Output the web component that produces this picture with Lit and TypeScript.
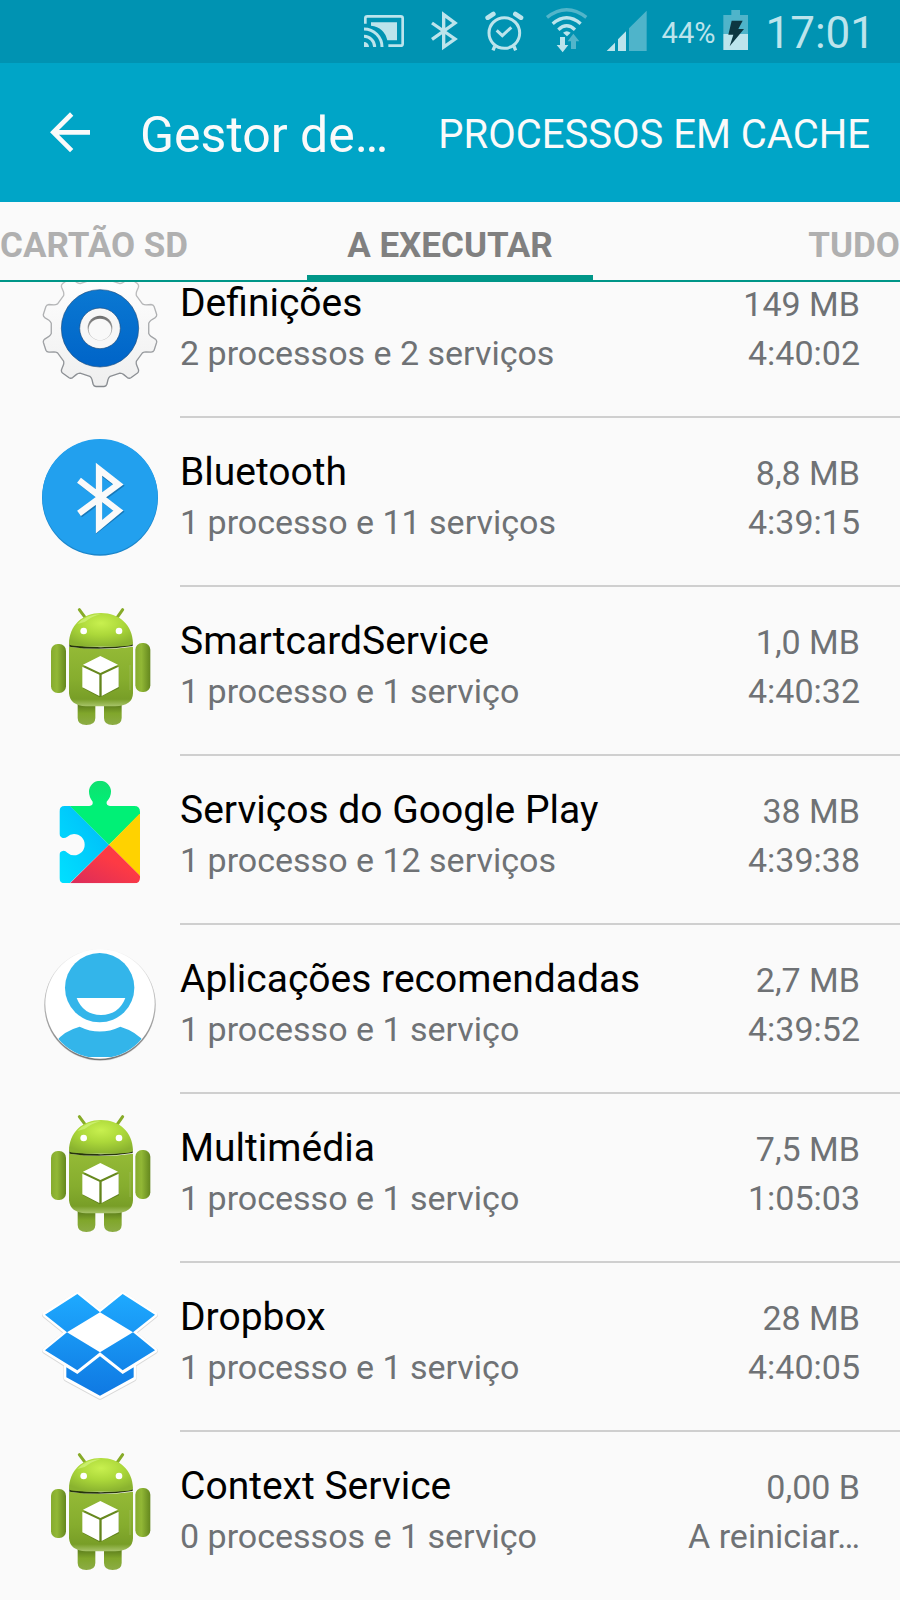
import { LitElement, html, css, svg } from "lit";
import { customElement, property, state } from "lit/decorators.js";

type IconName = "gear" | "bluetooth" | "android" | "play" | "person" | "dropbox";

interface Process {
  icon: IconName;
  name: string;
  detail: string;
  memory: string;
  time: string;
}

const PROCESSES: Process[] = [
  { icon: "gear", name: "Definições", detail: "2 processos e 2 serviços", memory: "149 MB", time: "4:40:02" },
  { icon: "bluetooth", name: "Bluetooth", detail: "1 processo e 11 serviços", memory: "8,8 MB", time: "4:39:15" },
  { icon: "android", name: "SmartcardService", detail: "1 processo e 1 serviço", memory: "1,0 MB", time: "4:40:32" },
  { icon: "play", name: "Serviços do Google Play", detail: "1 processo e 12 serviços", memory: "38 MB", time: "4:39:38" },
  { icon: "person", name: "Aplicações recomendadas", detail: "1 processo e 1 serviço", memory: "2,7 MB", time: "4:39:52" },
  { icon: "android", name: "Multimédia", detail: "1 processo e 1 serviço", memory: "7,5 MB", time: "1:05:03" },
  { icon: "dropbox", name: "Dropbox", detail: "1 processo e 1 serviço", memory: "28 MB", time: "4:40:05" },
  { icon: "android", name: "Context Service", detail: "0 processos e 1 serviço", memory: "0,00 B", time: "A reiniciar…" },
];

/* Outline of a cog with ten teeth. */
function cogPath(cx: number, cy: number): string {
  const at = (r: number, deg: number) => {
    const a = (deg * Math.PI) / 180;
    return `${(cx + r * Math.cos(a)).toFixed(1)} ${(cy + r * Math.sin(a)).toFixed(1)}`;
  };
  let d = "";
  for (let i = 0; i < 10; i++) {
    const t = 18 + i * 36;
    d += `${i ? "L" : "M"}${at(147, t - 12)}`;
    d += `Q${at(150, t - 10)} ${at(155, t - 9)}L${at(169, t - 7)}Q${at(175, t - 6)} ${at(175, t - 4)}`;
    d += `L${at(175, t + 4)}Q${at(175, t + 6)} ${at(169, t + 7)}L${at(155, t + 9)}Q${at(150, t + 10)} ${at(147, t + 12)}`;
  }
  return d + "Z";
}

const ICONS: Record<IconName, { box: string; art: unknown }> = {
  gear: {
    box: "60 -3 360 360",
    art: svg`
      <defs>
        <linearGradient id="cog" x1="0" y1="0" x2="0" y2="1"><stop offset="0" stop-color="#fff"/><stop offset="1" stop-color="#efefef"/></linearGradient>
        <linearGradient id="cogEdge" x1="0" y1="0" x2="0" y2="1"><stop offset="0" stop-color="#c8c8c8"/><stop offset="1" stop-color="#85898e"/></linearGradient>
        <linearGradient id="cogBlue" x1="0" y1="0" x2="0" y2="1"><stop offset="0" stop-color="#0a78d2"/><stop offset="1" stop-color="#0064c8"/></linearGradient>
        <linearGradient id="cogHole" x1="0" y1="0" x2="0" y2="1"><stop offset="0" stop-color="#6c6c6c"/><stop offset="1" stop-color="#c6c6c6"/></linearGradient>
      </defs>
      <path d=${cogPath(240, 175)} fill="url(#cog)" stroke="url(#cogEdge)" stroke-width="4" stroke-linejoin="round"/>
      <circle cx="240" cy="175" r="116" fill="url(#cogBlue)" stroke="#1c4f80" stroke-width="2"/>
      <circle cx="240" cy="175" r="61" fill="#f7f7f7" stroke="#1d4c7c" stroke-width="2"/>
      <circle cx="240" cy="174" r="37" fill="url(#cogHole)"/>
      <ellipse cx="240" cy="178" rx="34" ry="32" fill="#f9f9f9"/>`,
  },
  bluetooth: {
    box: "60 54 360 360",
    art: svg`
      <circle cx="240" cy="233" r="174" fill="#1b86cb"/>
      <circle cx="240" cy="230" r="173" fill="#22a0ee"/>
      <path d="M180 184L298 275L237 323V152L298 197L180 284" fill="none" stroke="#1878b8" stroke-width="19"/>
      <path d="M177 181L295 272L237 320V148L295 193L177 280" fill="none" stroke="#fafafa" stroke-width="19"/>`,
  },
  android: {
    box: "60 51 360 360",
    art: svg`
      <defs>
        <radialGradient id="head" cx=".5" cy=".3" r=".7"><stop offset="0" stop-color="#c8f04f"/><stop offset=".5" stop-color="#acd83a"/><stop offset="1" stop-color="#8ab32f"/></radialGradient>
        <linearGradient id="torso" x1="0" y1="0" x2="0" y2="1"><stop offset="0" stop-color="#94ba36"/><stop offset=".55" stop-color="#86ad2e"/><stop offset=".88" stop-color="#789e27"/><stop offset="1" stop-color="#a8c46a"/></linearGradient>
        <linearGradient id="limb" x1="0" y1="0" x2="1" y2="0"><stop offset="0" stop-color="#86ab2e"/><stop offset=".4" stop-color="#92b836"/><stop offset="1" stop-color="#64871e"/></linearGradient>
        <linearGradient id="leg" x1="0" y1="0" x2="0" y2="1"><stop offset="0" stop-color="#506f16"/><stop offset=".5" stop-color="#80a62b"/><stop offset="1" stop-color="#8cac45"/></linearGradient>
      </defs>
      <path d="M178 59L198 86M308 59L289 86" stroke="#87ab28" stroke-width="9" stroke-linecap="round"/>
      <path d="M173 335H226V384Q226 405 199 405Q173 405 173 384ZM252 335H305V384Q305 405 278 405Q252 405 252 384Z" fill="url(#leg)"/>
      <rect x="93" y="162" width="45" height="147" rx="20" fill="url(#limb)"/>
      <rect x="346" y="159" width="45" height="147" rx="20" fill="url(#limb)"/>
      <path d="M147 170Q242 184 339 170V310Q338 348 285 349H198Q150 347 147 310Z" fill="url(#torso)"/>
      <path d="M148 162Q242 182 338 162V168Q242 184 148 170Z" fill="#26340c"/>
      <path d="M147 162C148 106 187 69 243 69C299 69 338 106 339 160Q339 166 325 167Q242 174 161 167Q147 166 147 162Z" fill="url(#head)"/>
      <path d="M172 102Q200 72 243 72Q214 80 194 96Z" fill="#d9f98a" opacity=".6"/>
      <circle cx="191" cy="123" r="10" fill="#fff"/><circle cx="297" cy="123" r="10" fill="#fff"/>
      <path d="M189 231V295L239 322L297 295V231L241 202Z" fill="#4a6811" opacity=".55"/>
      <path d="M241 198L294 224L241 249L189 224ZM187 230L238 254V318L187 292ZM245 254L296 230V291L245 318Z" fill="#fff"/>
      <path d="M330 225V300" stroke="#a3bd65" stroke-width="3" opacity=".6"/>`,
  },
  play: {
    box: "60 48 360 360",
    art: svg`
      <defs>
        <clipPath id="puzzle"><path d="M134 138H208Q220 136 218 125Q207 111 207 95A33 33 0 0 1 273 95Q273 111 260 125Q258 136 270 138H343Q360 138 360 155V353Q360 370 343 370H135Q118 370 118 353V284Q119 275 128 273Q135 271 142 278Q151 286 162 286A32 32 0 0 0 162 222Q150 222 142 230Q134 236 126 233Q119 231 118 222V155Q118 138 134 138Z"/></clipPath>
        <linearGradient id="playBlue" x1="0" y1="1" x2="1" y2="0"><stop offset="0" stop-color="#00e1ff"/><stop offset="1" stop-color="#00b8f8"/></linearGradient>
        <linearGradient id="playRed" x1="0" y1="1" x2="1" y2="0"><stop offset="0" stop-color="#d92b5c"/><stop offset=".6" stop-color="#fd3a44"/></linearGradient>
        <linearGradient id="playGreen" x1="0" y1="0" x2="0" y2="1"><stop offset="0" stop-color="#10e070"/><stop offset=".4" stop-color="#00f076"/></linearGradient>
      </defs>
      <g clip-path="url(#puzzle)">
        <path d="M118 138H151L267 254L149 370H118Z" fill="url(#playBlue)"/>
        <path d="M150 138V60H362V160L267 254Z" fill="url(#playGreen)"/>
        <path d="M362 158V350L267 254Z" fill="#ffd200"/>
        <path d="M267 254L362 349V372H148Z" fill="url(#playRed)"/>
      </g>`,
  },
  person: {
    box: "60 45 360 360",
    art: svg`
      <defs>
        <clipPath id="face"><circle cx="240" cy="222" r="163"/></clipPath>
        <linearGradient id="rim" x1="0" y1="0" x2="0" y2="1"><stop offset="0" stop-color="#f5f5f5"/><stop offset=".5" stop-color="#b4b4b4"/><stop offset="1" stop-color="#777"/></linearGradient>
      </defs>
      <circle cx="240" cy="226" r="167" fill="#000" opacity=".1"/>
      <circle cx="240" cy="224" r="167" fill="url(#rim)"/>
      <circle cx="240" cy="222" r="164" fill="#fff"/>
      <circle cx="239" cy="173" r="104" fill="#33b5ea"/>
      <path d="M170 204H316Q297 254 243 255Q189 254 170 204Z" fill="#fff"/>
      <path clip-path="url(#face)" d="M105 338Q130 303 179 290Q239 319 301 290Q350 305 375 338L360 381H120Z" fill="#33b5ea"/>`,
  },
  dropbox: {
    box: "60 39 360 360",
    art: svg`
      <defs>
        <linearGradient id="box" gradientUnits="userSpaceOnUse" x1="0" y1="70" x2="0" y2="380"><stop offset="0" stop-color="#1eaaff"/><stop offset="1" stop-color="#0f78e2"/></linearGradient>
      </defs>
      <g stroke-linejoin="round">
        <path d="M172 72L240 127L308 72L405 134L339 187L405 241L341 282V324L240 379L139 324V282L75 241L141 187L75 134Z" fill="#aaa" stroke="#d8d8d8" stroke-width="17" transform="translate(0 2)"/>
        <path d="M172 72L240 127L308 72L405 134L339 187L405 241L341 282V324L240 379L139 324V282L75 241L141 187L75 134Z" fill="#fff" stroke="#fff" stroke-width="15"/>
      </g>
      <path d="M172 72L240 127L141 187L75 134ZM308 72L405 134L339 187L240 127ZM141 187L240 247L172 301L75 241ZM339 187L405 241L308 301L240 247Z" fill="url(#box)"/>
      <path d="M139 292L172 312L240 259L308 312L341 292V322L240 377L139 322Z" fill="url(#box)"/>`,
  },
};

const STATUS_ICONS = [
  {
    label: "Transmitir ecrã",
    box: "12 0 183 189",
    art: svg`
      <path d="M46 71V55Q46 49 52 49H152Q158 49 158 55V131Q158 137 152 137H115" fill="none" stroke="#bce4ec" stroke-width="8"/>
      <path d="M63 67H141V121H112Q103 82 63 77Z" fill="#bce4ec"/>
      <path d="M42 87A54 54 0 0 1 96 141M42 109A32 32 0 0 1 74 141" fill="none" stroke="#bce4ec" stroke-width="9"/>
      <path d="M42 126A15 15 0 0 1 57 141H42Z" fill="#bce4ec"/>`,
  },
  {
    label: "Bluetooth",
    box: "195 0 183 189",
    art: svg`<path d="M246 69L315 117L281 141V44L315 69L246 118" fill="none" stroke="#bce4ec" stroke-width="10"/>`,
  },
  {
    label: "Alarme",
    box: "378 0 183 189",
    art: svg`
      <circle cx="463" cy="99" r="46" fill="none" stroke="#bce4ec" stroke-width="9"/>
      <path d="M413 53L430 42M513 53L496 42" stroke="#bce4ec" stroke-width="14" stroke-linecap="round"/>
      <path d="M434 139L429 151M492 139L497 151" stroke="#bce4ec" stroke-width="10"/>
      <path d="M440 91L457 107L484 82" fill="none" stroke="#bce4ec" stroke-width="9"/>`,
  },
  {
    label: "Wi-Fi",
    box: "561 0 183 189",
    art: svg`
      <g fill="none" stroke="#bce4ec" stroke-width="10">
        <path d="M591 52Q650 6 709 52" stroke="#52b5ca"/>
        <path d="M608 71Q650 35 692 71"/>
        <path d="M625 89Q650 66 675 89"/>
      </g>
      <path d="M639 98Q650 89 662 98L651 109Z" fill="#bce4ec"/>
      <path d="M630 111H645V135H655L638 157L620 135H630Z" fill="#bce4ec"/>
      <path d="M663 147V124H653L670 101L688 124H678V147Z" fill="#52b5ca"/>`,
  },
  {
    label: "Rede móvel",
    box: "744 0 183 189",
    art: svg`
      <path d="M770 153L795 128V153ZM804 153V118L828 94V153Z" fill="#bce4ec"/>
      <path d="M837 153V85L890 32V153Z" fill="#4fb4ca"/>`,
  },
];

@customElement("status-bar")
export class StatusBar extends LitElement {
  static styles = css`
    :host {
      display: flex;
      align-items: center;
      justify-content: flex-end;
      height: 63px;
      padding-right: 25px;
      background: #0093b2;
      color: #bce4ec;
      white-space: nowrap;
    }
    .glyph {
      flex: none;
      width: 61px;
      height: 63px;
    }
    .level {
      margin-left: 3px;
      font-size: 29px;
      line-height: 63px;
      padding-top: 3px;
    }
    .battery {
      flex: none;
      width: 27px;
      height: 63px;
      margin: 0 16px 0 7px;
    }
    .clock {
      font-size: 44px;
      line-height: 63px;
      padding-top: 4px;
    }
  `;

  render() {
    return html`
      ${STATUS_ICONS.map(
        (i) => html`<svg class="glyph" viewBox=${i.box} role="img" aria-label=${i.label}>${i.art}</svg>`
      )}
      <span class="level">44%</span>
      <svg class="battery" viewBox="369 0 81 189" role="img" aria-label="A carregar">
        <path d="M373 45H397V30H423V45H447V102H373Z" fill="#4fb4ca" />
        <path d="M373 102H447V150H373Z" fill="#bce4ec" />
        <path d="M398 62H431L418 87H435L392 139L403 104H388Z" fill="#0d3741" />
      </svg>
      <time class="clock">17:01</time>
    `;
  }
}

@customElement("process-row")
export class ProcessRow extends LitElement {
  @property({ attribute: false }) process!: Process;
  @property({ type: Boolean }) last = false;

  static styles = css`
    :host {
      display: block;
    }
    .row {
      display: flex;
      align-items: stretch;
      gap: 20px;
      width: 100%;
      height: 169px;
      margin: 0;
      padding: 0 0 0 40px;
      border: 0;
      background: none;
      font: inherit;
      color: #6f7275;
      text-align: left;
      cursor: pointer;
    }
    .icon {
      flex: none;
      width: 120px;
      height: 120px;
      margin-top: 20px;
    }
    .body {
      flex: 1;
      min-width: 0;
      display: grid;
      grid-template-columns: minmax(0, 1fr) auto;
      grid-auto-rows: 50px;
      align-items: baseline;
      padding: 29px 40px 0 0;
      border-bottom: 2px solid #cfcfcf;
      font-size: 34px;
      line-height: 50px;
      white-space: nowrap;
    }
    .body.last {
      border-bottom: 0;
    }
    .name {
      font-size: 39px;
      color: #000;
    }
    .value {
      text-align: right;
    }
  `;

  render() {
    const p = this.process;
    const icon = ICONS[p.icon];
    return html`
      <button class="row" type="button">
        <svg class="icon" viewBox=${icon.box} aria-hidden="true">${icon.art}</svg>
        <span class="body ${this.last ? "last" : ""}">
          <span class="name">${p.name}</span>
          <span class="value">${p.memory}</span>
          <span class="detail">${p.detail}</span>
          <span class="value">${p.time}</span>
        </span>
      </button>
    `;
  }
}

@customElement("app-root")
export class AppRoot extends LitElement {
  @state() private selected = 1;

  private tabs = ["CARTÃO SD", "A EXECUTAR", "TUDO"];

  static styles = css`
    :host {
      display: flex;
      flex-direction: column;
      height: 100vh;
      overflow: hidden;
      background: #fafafa;
      font-family: Roboto, "Noto Sans", sans-serif;
    }
    .header {
      flex: none;
      display: flex;
      align-items: center;
      height: 139px;
      padding: 0 30px 0 40px;
      background: #00a5c7;
      color: #fafafa;
    }
    button {
      margin: 0;
      padding: 0;
      border: 0;
      background: none;
      font: inherit;
      color: inherit;
      white-space: nowrap;
      cursor: pointer;
    }
    .back {
      flex: none;
      width: 60px;
      height: 60px;
      margin-right: 40px;
    }
    .arrow {
      display: block;
      width: 60px;
      height: 60px;
    }
    .title {
      flex: 1;
      margin: 0;
      padding-top: 4px;
      font-size: 50px;
      font-weight: 400;
      line-height: 60px;
      white-space: nowrap;
    }
    .action {
      padding-top: 4px;
      font-size: 40px;
      line-height: 60px;
    }
    .tabs {
      flex: none;
      display: grid;
      grid-template-columns: 1fr 286px 1fr;
      height: 80px;
      box-sizing: border-box;
      border-bottom: 2px solid #009688;
      color: #b0b0b0;
    }
    .tab {
      padding-top: 14px;
      border-bottom: 5px solid transparent;
      font-size: 35px;
      font-weight: 700;
      line-height: 40px;
      text-align: center;
    }
    .tab:first-child {
      text-align: left;
    }
    .tab:last-child {
      text-align: right;
    }
    .tab.on {
      border-bottom-color: #009688;
      color: #808080;
    }
    .viewport {
      flex: 1;
      min-height: 0;
      overflow: hidden;
    }
    .list {
      margin: -33px 0 0;
      padding: 0;
      list-style: none;
    }
  `;

  render() {
    return html`
      <status-bar></status-bar>
      <header class="header">
        <button class="back" type="button" aria-label="Voltar">
          <svg class="arrow" viewBox="120 129 180 180" aria-hidden="true">
            <path d="M270 217H160M215 162L160 217L215 272" fill="none" stroke="#fafafa" stroke-width="14" />
          </svg>
        </button>
        <h1 class="title">Gestor de…</h1>
        <button class="action" type="button">PROCESSOS EM CACHE</button>
      </header>
      <div class="tabs" role="tablist">
        ${this.tabs.map(
          (t, i) => html`<button
            class="tab ${i === this.selected ? "on" : ""}"
            type="button"
            role="tab"
            aria-selected=${i === this.selected ? "true" : "false"}
            @click=${() => (this.selected = i)}
          >${t}</button>`
        )}
      </div>
      <main class="viewport">
        <ul class="list">
          ${PROCESSES.map(
            (p, i) => html`<li>
              <process-row .process=${p} ?last=${i === PROCESSES.length - 1}></process-row>
            </li>`
          )}
        </ul>
      </main>
    `;
  }
}
